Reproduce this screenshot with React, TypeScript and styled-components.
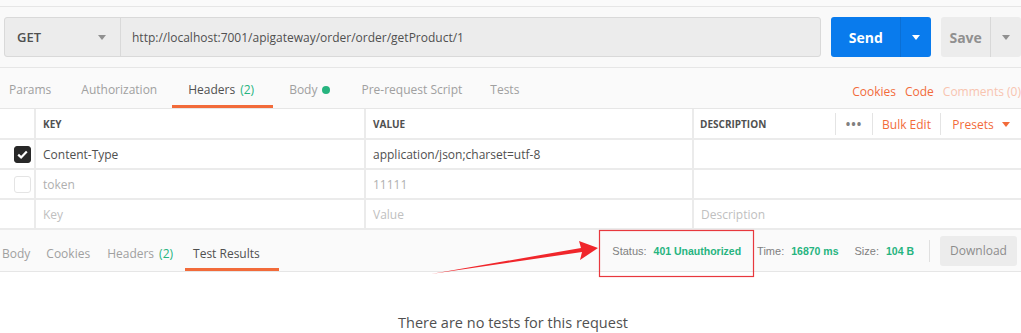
import React from "react";
import styled, { createGlobalStyle } from "styled-components";

const Global = createGlobalStyle`
  html, body { margin: 0; padding: 0; background: #ffffff; }
  body { font-family: "Open Sans", "Liberation Sans", sans-serif; width: 1021px; height: 333px; overflow: hidden; }
  * { box-sizing: border-box; }
`;

const Page = styled.div`
  position: relative;
  width: 1021px;
  height: 333px;
  background: #fff;
`;

const TopStrip = styled.div`
  height: 7px;
  background: #fafafa;
  border-bottom: 1px solid #e6e6e6;
`;

const RequestBar = styled.div`
  display: flex;
  align-items: stretch;
  height: 61px;
  padding: 10px 0 10px 4px;
  background: #f9f9f9;
  border-bottom: 1px solid #e6e6e6;
`;

const UrlGroup = styled.div`
  display: flex;
  width: 819px;
  height: 40px;
  border: 1px solid #d9d9d9;
  border-radius: 3px;
  background: #ececec;
  overflow: hidden;
`;

const MethodSelect = styled.div`
  width: 116px;
  display: flex;
  align-items: center;
  justify-content: space-between;
  padding: 0 14px 0 12px;
  border-right: 1px solid #d9d9d9;
  font-size: 13px;
  font-weight: 600;
  color: #505050;
`;

const Caret = styled.span<{ $color: string }>`
  width: 0;
  height: 0;
  border-left: 4px solid transparent;
  border-right: 4px solid transparent;
  border-top: 5px solid ${(p) => p.$color};
`;

const UrlText = styled.div`
  display: flex;
  align-items: center;
  padding-left: 11px;
  font-size: 12px;
  color: #505050;
`;

const SplitButton = styled.div<{ $primary?: boolean; $w: number; $split: number }>`
  display: flex;
  margin-left: 10px;
  width: ${(p) => p.$w}px;
  height: 40px;
  border-radius: 3px;
  background: ${(p) => (p.$primary ? "#097bed" : "#ececec")};
  color: ${(p) => (p.$primary ? "#ffffff" : "#909090")};
  font-size: 14px;
  font-weight: 700;
  & > div:first-child {
    width: ${(p) => p.$split}px;
    display: flex;
    align-items: center;
    justify-content: center;
    border-right: 1px solid ${(p) => (p.$primary ? "#0a6fd5" : "#d8d8d8")};
  }
  & > div:last-child {
    flex: 1;
    display: flex;
    align-items: center;
    justify-content: center;
  }
`;

const TabsBar = styled.div<{ $h: number; $line?: boolean }>`
  display: flex;
  align-items: stretch;
  height: ${(p) => p.$h}px;
  background: #fafafa;
  border-bottom: ${(p) => (p.$line ? "1px solid #e6e6e6" : "none")};
`;

const Tab = styled.div<{ $active?: boolean; $l: number; $r: number; $top: number }>`
  display: flex;
  align-items: center;
  padding: ${(p) => p.$top}px ${(p) => p.$r}px 0 ${(p) => p.$l}px;
  font-size: 12px;
  color: ${(p) => (p.$active ? "#505050" : "#a0a0a0")};
  border-bottom: 3px solid ${(p) => (p.$active ? "#f26b3a" : "transparent")};
  white-space: nowrap;
  gap: 5px;
`;

const Green = styled.span`
  color: #26b47f;
`;

const Dot = styled.span`
  width: 8px;
  height: 8px;
  border-radius: 50%;
  background: #26b47f;
`;

const RightLinks = styled.div`
  margin-left: auto;
  display: flex;
  align-items: center;
  gap: 9px;
  padding-top: 6px;
  font-size: 12px;
  color: #f26b3a;
  white-space: nowrap;
`;

const Faded = styled.span`
  color: #f8c4b0;
`;

const Table = styled.div`
  display: grid;
  grid-template-columns: 36px 330px 328px 1fr;
  border-top: 1px solid #e6e6e6;
`;

const Cell = styled.div<{ $h: number; $last?: boolean }>`
  height: ${(p) => p.$h}px;
  display: flex;
  align-items: center;
  padding-left: 7px;
  padding-top: 1px;
  border-bottom: 2px solid #ebebeb;
  border-right: ${(p) => (p.$last ? "none" : "2px solid #ebebeb")};
  font-size: 12px;
  color: #505050;
  white-space: nowrap;
`;

const HeadCell = styled(Cell)`
  font-size: 10px;
  font-weight: 700;
  color: #505050;
`;

const Muted = styled.span`
  color: #b0b0b0;
`;

const Placeholder = styled.span`
  color: #c0c0c0;
`;

const CheckCell = styled(Cell)`
  padding-left: 14px;
`;

const Check = styled.div<{ $on?: boolean }>`
  width: 17px;
  height: 17px;
  border-radius: 3px;
  background: ${(p) => (p.$on ? "#282828" : "#ffffff")};
  border: 1px solid ${(p) => (p.$on ? "#282828" : "#e4e4e4")};
  display: flex;
  align-items: center;
  justify-content: center;
`;

const DescHead = styled(HeadCell)`
  padding-left: 6px;
  padding-right: 0;
`;

const HeadTools = styled.div`
  margin-left: auto;
  display: flex;
  align-items: center;
  height: 100%;
  font-size: 12px;
  font-weight: 400;
  color: #f26b3a;
`;

const Tool = styled.div<{ $w: number }>`
  display: flex;
  align-items: center;
  justify-content: center;
  gap: 8px;
  width: ${(p) => p.$w}px;
  height: 22px;
  border-left: 1px solid #e4e4e4;
`;

const Dots = styled.span`
  color: #808080;
  font-size: 12px;
  letter-spacing: 1px;
  font-weight: 700;
`;

const Meta = styled.div`
  margin-left: auto;
  display: flex;
  align-items: center;
  font-family: "Liberation Sans", Arial, sans-serif;
  font-size: 11px;
  color: #808080;
  padding-right: 4px;
`;

const MetaItem = styled.span`
  margin-left: 16px;
  & b {
    font-size: 10.5px;
    font-weight: 700;
    color: #26b47f;
    margin-left: 7px;
  }
`;

const MetaSep = styled.span`
  width: 1px;
  height: 22px;
  background: #e0e0e0;
  margin: 0 10px 0 15px;
`;

const DownloadBtn = styled.div`
  width: 77px;
  height: 30px;
  display: flex;
  align-items: center;
  justify-content: center;
  border-radius: 3px;
  background: #ececec;
  color: #8c8c8c;
  font-family: "Open Sans", sans-serif;
  font-size: 12px;
`;

const Empty = styled.div`
  display: flex;
  justify-content: center;
  padding-top: 41px;
  padding-left: 5px;
  font-size: 14.5px;
  color: #505050;
`;

const Annotation = styled.svg`
  position: absolute;
  left: 0;
  top: 0;
  pointer-events: none;
`;

export default function App() {
  return (
    <Page>
      <Global />
      <TopStrip />
      <RequestBar>
        <UrlGroup>
          <MethodSelect>
            GET <Caret $color="#909090" />
          </MethodSelect>
          <UrlText>http://localhost:7001/apigateway/order/order/getProduct/1</UrlText>
        </UrlGroup>
        <SplitButton $primary $w={100} $split={70}>
          <div>Send</div>
          <div>
            <Caret $color="#ffffff" />
          </div>
        </SplitButton>
        <SplitButton $w={80} $split={50}>
          <div>Save</div>
          <div>
            <Caret $color="#909090" />
          </div>
        </SplitButton>
      </RequestBar>
      <TabsBar $h={40}>
        <Tab $top={6} $l={9} $r={12}>Params</Tab>
        <Tab $top={6} $l={18} $r={15}>Authorization</Tab>
        <Tab $top={6} $l={16} $r={19} $active>
          Headers <Green>(2)</Green>
        </Tab>
        <Tab $top={6} $l={16} $r={13}>
          Body <Dot />
        </Tab>
        <Tab $top={6} $l={18} $r={14}>Pre-request Script</Tab>
        <Tab $top={6} $l={14} $r={10}>Tests</Tab>
        <RightLinks>
          <span>Cookies</span>
          <span>Code</span>
          <Faded>Comments (0)</Faded>
        </RightLinks>
      </TabsBar>
      <Table>
        <HeadCell $h={31} />
        <HeadCell $h={31}>KEY</HeadCell>
        <HeadCell $h={31}>VALUE</HeadCell>
        <DescHead $h={31} $last>
          DESCRIPTION
          <HeadTools>
            <Tool $w={37}>
              <Dots>•••</Dots>
            </Tool>
            <Tool $w={68}>Bulk Edit</Tool>
            <Tool $w={81}>
              Presets <Caret $color="#f26b3a" />
            </Tool>
          </HeadTools>
        </DescHead>

        <CheckCell $h={30}>
          <Check $on>
            <svg width="11" height="9" viewBox="0 0 11 9">
              <path d="M1.2 4.6 L4.1 7.4 L9.8 1.4" stroke="#fff" strokeWidth="2.2" fill="none" />
            </svg>
          </Check>
        </CheckCell>
        <Cell $h={30}>Content-Type</Cell>
        <Cell $h={30}>application/json;charset=utf-8</Cell>
        <Cell $h={30} $last />

        <CheckCell $h={30}>
          <Check />
        </CheckCell>
        <Cell $h={30}>
          <Muted>token</Muted>
        </Cell>
        <Cell $h={30}>
          <Muted>11111</Muted>
        </Cell>
        <Cell $h={30} $last />

        <Cell $h={30} />
        <Cell $h={30}>
          <Placeholder>Key</Placeholder>
        </Cell>
        <Cell $h={30}>
          <Placeholder>Value</Placeholder>
        </Cell>
        <Cell $h={30} $last>
          <Placeholder>Description</Placeholder>
        </Cell>
      </Table>
      <TabsBar $h={42} $line>
        <Tab $top={8} $l={2} $r={8}>Body</Tab>
        <Tab $top={8} $l={8} $r={8}>Cookies</Tab>
        <Tab $top={8} $l={9} $r={12}>
          Headers <Green>(2)</Green>
        </Tab>
        <Tab $top={8} $l={8} $r={19} $active>
          Test Results
        </Tab>
        <Meta>
          <MetaItem>
            Status:<b>401 Unauthorized</b>
          </MetaItem>
          <MetaItem>
            Time:<b>16870 ms</b>
          </MetaItem>
          <MetaItem>
            Size:<b>104 B</b>
          </MetaItem>
          <MetaSep />
          <DownloadBtn>Download</DownloadBtn>
        </Meta>
      </TabsBar>
      <Empty>There are no tests for this request</Empty>
      <Annotation width="1021" height="333" viewBox="0 0 1021 333">
        <rect x="599.5" y="230.5" width="154" height="46" fill="none" stroke="#e8383d" strokeWidth="1.2" />
        <polygon points="431,274 582,252 580,260 598,248 579,241 581,248" fill="#f0262b" />
      </Annotation>
    </Page>
  );
}
